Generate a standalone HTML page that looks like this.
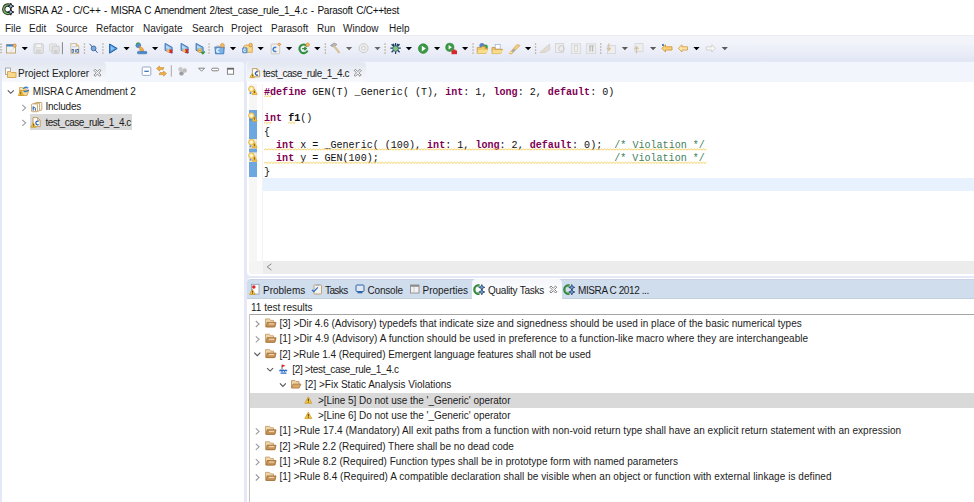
<!DOCTYPE html>
<html><head><meta charset="utf-8"><style>
*{margin:0;padding:0;box-sizing:border-box}
html,body{width:974px;height:502px;overflow:hidden;background:#fff;font-family:"Liberation Sans",sans-serif;font-size:10px;color:#1a1a1a}
.a{position:absolute;white-space:pre}
svg.a{overflow:visible}
.t{font-size:10px;line-height:12px;color:#1b1b1b}
.code{font-family:"Liberation Mono",monospace;font-size:10.07px;line-height:13.33px;color:#101010}
.kw{color:#7f0055;font-weight:bold}
.cm{color:#3f7f5f}
</style></head><body>
<div class="a " style="left:0;top:35px;width:974px;height:27px;background:linear-gradient(#f4f5f9 0%,#f1f3fa 30%,#e9ecf7 70%,#e0e5f4 100%)"></div>
<div class="a " style="left:0;top:34.6px;width:974px;height:1px;background:#ecedf2"></div>
<div class="a " style="left:0;top:61px;width:974px;height:441px;background:#e5e8f6"></div>
<svg class="a" style="left:0px;top:0px" width="16" height="18" viewBox="0 0 16 18">
<path d="M9.47 5.16 A4.3 4.3 0 1 0 9.47 13.24" fill="none" stroke="#2e2e2e" stroke-width="3.3"/>
<path d="M10.02 5.40 A4.3 4.3 0 1 0 10.02 13.00" fill="none" stroke="#74c462" stroke-width="1.3"/>
<path d="M13.90 6.20 L11.68 7.08 L10.80 9.30 L9.92 7.08 L7.70 6.20 L9.92 5.32 L10.80 3.10 L11.68 5.32 Z" fill="#8dbce9" stroke="#1f1f1f" stroke-width="1" stroke-linejoin="round"/>
<path d="M13.90 12.10 L11.68 12.98 L10.80 15.20 L9.92 12.98 L7.70 12.10 L9.92 11.22 L10.80 9.00 L11.68 11.22 Z" fill="#8dbce9" stroke="#1f1f1f" stroke-width="1" stroke-linejoin="round"/>
</svg>
<div class="a t" style="left:18px;top:4.8px;letter-spacing:-0.26px;word-spacing:1.1px;color:#0f0f0f">MISRA A2 - C/C++ - MISRA C Amendment 2/test_case_rule_1_4.c - Parasoft C/C++test</div>
<div class="a t" style="left:5px;top:22.8px">File</div>
<div class="a t" style="left:29px;top:22.8px">Edit</div>
<div class="a t" style="left:56px;top:22.8px">Source</div>
<div class="a t" style="left:96px;top:22.8px">Refactor</div>
<div class="a t" style="left:143px;top:22.8px">Navigate</div>
<div class="a t" style="left:192px;top:22.8px">Search</div>
<div class="a t" style="left:231px;top:22.8px">Project</div>
<div class="a t" style="left:271px;top:22.8px">Parasoft</div>
<div class="a t" style="left:317px;top:22.8px">Run</div>
<div class="a t" style="left:343px;top:22.8px">Window</div>
<div class="a t" style="left:389px;top:22.8px">Help</div>
<svg class="a" style="left:0;top:0" width="974" height="62" viewBox="0 0 974 62"><rect x="0" y="43.5" width="2" height="1.3" fill="#c4b9a5"/><rect x="0" y="46.3" width="2" height="1.3" fill="#c4b9a5"/><rect x="0" y="49.1" width="2" height="1.3" fill="#c4b9a5"/><rect x="0" y="51.9" width="2" height="1.3" fill="#c4b9a5"/><rect x="6.5" y="44.5" width="9" height="8.5" fill="#eaf4fc" stroke="#c9a66b" stroke-width="1"/><rect x="6.5" y="44.5" width="8" height="2" fill="#3d84d2"/><path d="M9.5 52.6 L14.6 47.2" stroke="#f3dcb0" stroke-width="1"/><circle cx="14.6" cy="45.6" r="1.6" fill="#f2c07a" stroke="#c98232" stroke-width="0.8"/><path d="M21.7 47 h6.2 l-3.1 3.3 z" fill="#000"/><rect x="34" y="43.8" width="9.3" height="9.6" rx="1" fill="#e6e6e6" stroke="#cdcdcd" stroke-width="1"/><rect x="36" y="44" width="5.3" height="3.4" fill="#f6f6f6" stroke="#cfcfcf" stroke-width="0.6"/><rect x="36" y="49.5" width="5.3" height="3.8" fill="#d6d6d6"/><rect x="49.5" y="43.8" width="7" height="7.5" rx="1" fill="#e9e9e9" stroke="#d2d2d2" stroke-width="0.8"/><rect x="52" y="46" width="7.3" height="7.6" rx="1" fill="#e2e2e2" stroke="#c9c9c9" stroke-width="0.8"/><rect x="54" y="50" width="3.6" height="3.4" fill="#cfcfcf"/><rect x="61.9" y="42.2" width="1.1" height="12" fill="#8f8f8f"/><path d="M70.8 43.6 h5.6 l2.4 2.4 v7.6 h-8 z" fill="#f1f4f8" stroke="#c7ab80" stroke-width="0.8"/><path d="M76.4 43.6 v2.4 h2.4" fill="#f3cf8f" stroke="#e0a85a" stroke-width="0.8"/><path d="M72 46.8 h4.5" stroke="#a9bfd8" stroke-width="0.8"/><rect x="72" y="49.3" width="1.6" height="3.2" fill="#dfe6ef" stroke="#35598a" stroke-width="0.7"/><rect x="74.9" y="49.3" width="0.8" height="3.2" fill="#35598a"/><rect x="76.8" y="49.3" width="1.6" height="3.2" fill="#dfe6ef" stroke="#35598a" stroke-width="0.7"/><rect x="83.80000000000001" y="43.3" width="1.3" height="1.4" fill="#b3a690"/><rect x="83.80000000000001" y="46.3" width="1.3" height="1.4" fill="#b3a690"/><rect x="83.80000000000001" y="49.3" width="1.3" height="1.4" fill="#b3a690"/><rect x="83.80000000000001" y="52.3" width="1.3" height="1.4" fill="#b3a690"/><path d="M89.6 43.8 L97.6 52.8" stroke="#3a5a9a" stroke-width="1"/><circle cx="93.6" cy="48.4" r="2.4" fill="#7ea8d8" stroke="#3a6aa8" stroke-width="0.9"/><rect x="102.30000000000001" y="43.3" width="1.3" height="1.4" fill="#b3a690"/><rect x="102.30000000000001" y="46.3" width="1.3" height="1.4" fill="#b3a690"/><rect x="102.30000000000001" y="49.3" width="1.3" height="1.4" fill="#b3a690"/><rect x="102.30000000000001" y="52.3" width="1.3" height="1.4" fill="#b3a690"/><path d="M109.6 44 L117.2 48.5 L109.6 53.2 z" fill="#4d9be0" stroke="#1f5ca6" stroke-width="1"/><path d="M110.8 46 L114.6 48.5 L110.8 50.8 z" fill="#8cc4f0"/><path d="M123.5 47 h6.2 l-3.1 3.3 z" fill="#000"/><circle cx="138.3" cy="45.3" r="2.4" fill="#4f8fd0" stroke="#2e6aa8" stroke-width="0.6"/><path d="M136.5 44.3 a2 2 0 0 1 3 -0.8" stroke="#46a046" stroke-width="1.2" fill="none"/><path d="M139.5 46 L143 48.5 L143.5 51 L141.5 52 L140 50.5 z" fill="#f2b04a" stroke="#d08428" stroke-width="0.7"/><rect x="137.5" y="51.4" width="9.3" height="2.4" rx="0.8" fill="#4a8ad0" stroke="#2d6aa8" stroke-width="0.6"/><path d="M152 47 h6.2 l-3.1 3.3 z" fill="#000"/><path d="M165.10000000000002 43.4 L172.10000000000002 47.3 V53.2 L165.10000000000002 50.3 z" fill="#84bdea" stroke="#2f66ad" stroke-width="0.9" stroke-linejoin="round"/><path d="M166.10000000000002 45.4 L169.3 47.2 V49.5 L166.10000000000002 48 z" fill="#b8dcf6"/><circle cx="168.4" cy="50.8" r="1.9" fill="#f2b65e"/><path d="M169.6 49.6 l2.6 3.2 m0 -3.2 l-2.6 3.2" stroke="#d8262a" stroke-width="1.5"/><path d="M181.10000000000002 43.4 L188.10000000000002 47.3 V53.2 L181.10000000000002 50.3 z" fill="#84bdea" stroke="#2f66ad" stroke-width="0.9" stroke-linejoin="round"/><path d="M182.10000000000002 45.4 L185.3 47.2 V49.5 L182.10000000000002 48 z" fill="#b8dcf6"/><circle cx="184.4" cy="50.6" r="1.9" fill="#f2b65e"/><path d="M185.6 49.2 l2.4 3.8 m0 -3.8 l-2.4 3.8" stroke="#cc2a2a" stroke-width="1.5"/><path d="M196.10000000000002 43.4 L203.10000000000002 47.3 V53.2 L196.10000000000002 50.3 z" fill="#84bdea" stroke="#2f66ad" stroke-width="0.9" stroke-linejoin="round"/><path d="M197.10000000000002 45.4 L200.3 47.2 V49.5 L197.10000000000002 48 z" fill="#b8dcf6"/><circle cx="199.8" cy="50.6" r="2" fill="#f5cd6a" stroke="#c8902e" stroke-width="0.6"/><path d="M198.6 50.6 h2.4" stroke="#b07a20" stroke-width="0.6"/><path d="M201.6 52.4 l1.2 1.3 l2 -2.2" stroke="#2a9a2a" stroke-width="1.4" fill="none"/><rect x="208.4" y="43.3" width="1.3" height="1.4" fill="#b3a690"/><rect x="208.4" y="46.3" width="1.3" height="1.4" fill="#b3a690"/><rect x="208.4" y="49.3" width="1.3" height="1.4" fill="#b3a690"/><rect x="208.4" y="52.3" width="1.3" height="1.4" fill="#b3a690"/><path d="M216 46.5 q2 -1.6 4 0" fill="#c9c9c9" stroke="#aaa" stroke-width="0.6"/><path d="M215 47.4 h9.2 l-0.5 6.4 h-8.2 z" fill="#79b3ea" stroke="#3a74b8" stroke-width="0.9"/><path d="M214.2 47.2 h10.6" stroke="#6a8fb8" stroke-width="1"/><path d="M219.3 49 a1.7 1.7 0 1 0 0 3" stroke="#fff" stroke-width="1.2" fill="none"/><circle cx="222.4" cy="45.4" r="1.9" fill="#f1be6a" stroke="#d08a30" stroke-width="0.7"/><path d="M229.9 47 h6.2 l-3.1 3.3 z" fill="#000"/><path d="M243.5 46.5 q2.5 -2.8 5 -1 l1 1 h2.8 v5.8 h-8.8 z" fill="#f7d98a" stroke="#d6a550" stroke-width="0.9"/><rect x="242.6" y="47.8" width="4.4" height="5" rx="0.6" fill="#78b0e6" stroke="#3b77bc" stroke-width="0.7"/><path d="M245.6 49.2 a1.3 1.3 0 1 0 0 2.2" stroke="#fff" stroke-width="0.9" fill="none"/><circle cx="250.6" cy="45" r="1.8" fill="#f1be6a" stroke="#d08a30" stroke-width="0.7"/><path d="M257.6 47 h6.2 l-3.1 3.3 z" fill="#000"/><rect x="271.2" y="44" width="8.5" height="9.8" rx="0.8" fill="#f2f1ee" stroke="#cbc6bc" stroke-width="0.9"/><path d="M276.3 47.6 a2.1 2.1 0 1 0 0 3.6" stroke="#3f7fcd" stroke-width="1.5" fill="none"/><path d="M279.3 42.9 l1.5 1.5 l-1.5 1.5 l-1.5 -1.5 z" fill="#f0c070" stroke="#d08a30" stroke-width="0.9"/><path d="M286 47 h6.2 l-3.1 3.3 z" fill="#000"/><path d="M307.2 46.3 A4.3 4.3 0 1 0 307.6 50.6" stroke="#2f8f3a" stroke-width="2.1" fill="none"/><path d="M302.2 48.6 h3.6 M304.4 47 l1.8 1.6 l-1.8 1.6" stroke="#2f8f3a" stroke-width="1.3" fill="none"/><circle cx="307.6" cy="44.8" r="1.8" fill="#f1be6a" stroke="#d08a30" stroke-width="0.7"/><path d="M314.2 47 h6.2 l-3.1 3.3 z" fill="#000"/><rect x="324.7" y="43.3" width="1.3" height="1.4" fill="#b3a690"/><rect x="324.7" y="46.3" width="1.3" height="1.4" fill="#b3a690"/><rect x="324.7" y="49.3" width="1.3" height="1.4" fill="#b3a690"/><rect x="324.7" y="52.3" width="1.3" height="1.4" fill="#b3a690"/><path d="M330.5 45.5 l3.5 -2.5 l3 1.5 l-1.8 1.2 l-1.7 1.2 z" fill="#b9b9b9" stroke="#8c8c8c" stroke-width="0.7"/><path d="M334 46 L339.5 53" stroke="#d9c39c" stroke-width="2.2"/><path d="M346 47 h6.2 l-3.1 3.3 z" fill="#6a6a6a"/><path d="M361.8 43.8 h3.6 l2.6 2.6 v3.6 l-2.6 2.6 h-3.6 l-2.6 -2.6 v-3.6 z" fill="#ececec" stroke="#c8c8c8" stroke-width="0.9"/><circle cx="363.6" cy="48.2" r="1.8" fill="#f6f6f6" stroke="#c2c2c2" stroke-width="0.8"/><path d="M374.4 47 h6.2 l-3.1 3.3 z" fill="#6a6a6a"/><rect x="384.4" y="43.3" width="1.3" height="1.4" fill="#b3a690"/><rect x="384.4" y="46.3" width="1.3" height="1.4" fill="#b3a690"/><rect x="384.4" y="49.3" width="1.3" height="1.4" fill="#b3a690"/><rect x="384.4" y="52.3" width="1.3" height="1.4" fill="#b3a690"/><path d="M390.4 48.2 h10.4 M395.6 43 v11 M391.6 44.2 l8 8 M399.6 44.2 l-8 8 M393.3 43.8 l1 2 M398 43.8 l-1 2" stroke="#1f3d62" stroke-width="1.25"/><circle cx="395.6" cy="48.6" r="2.8" fill="#86c47a" stroke="#2f5d86" stroke-width="0.8"/><path d="M405.8 47 h6.2 l-3.1 3.3 z" fill="#000"/><circle cx="423.2" cy="48.6" r="4.8" fill="#3a9a44" stroke="#2a7a30" stroke-width="0.6"/><path d="M421.8 45.7 L425.8 48.6 L421.8 51.5 z" fill="#fff"/><path d="M434 47 h6.2 l-3.1 3.3 z" fill="#000"/><circle cx="449.8" cy="47.3" r="4.1" fill="#3a9a44" stroke="#2a7a30" stroke-width="0.6"/><path d="M448.6 45 L451.9 47.3 L448.6 49.6 z" fill="#fff"/><path d="M451.5 50.5 h5.5 v3.7 h-5.5 z" fill="#d9262a"/><rect x="452.6" y="49.6" width="3" height="1.3" fill="#d9262a"/><path d="M462 47 h6.2 l-3.1 3.3 z" fill="#000"/><rect x="472.4" y="43.3" width="1.3" height="1.4" fill="#b3a690"/><rect x="472.4" y="46.3" width="1.3" height="1.4" fill="#b3a690"/><rect x="472.4" y="49.3" width="1.3" height="1.4" fill="#b3a690"/><rect x="472.4" y="52.3" width="1.3" height="1.4" fill="#b3a690"/><circle cx="482" cy="45.5" r="2.6" fill="#5f7fc8"/><circle cx="485.5" cy="47" r="2.4" fill="#3ea04a"/><path d="M477.2 47.5 h4 l1 -1 h3 v2 h2.5 l-1.8 5 h-8.7 z" fill="#f0ca6a" stroke="#c79440" stroke-width="0.8"/><path d="M478.5 50 h9.5 l-1.8 3.5 h-9 z" fill="#f8dd8c"/><rect x="495.2" y="44.5" width="5" height="4.6" fill="#fff" stroke="#9cb2cc" stroke-width="0.7"/><path d="M492 47.5 h3 v1.8 h7.5 l-1.8 4.3 h-8.7 z" fill="#f0ca6a" stroke="#c79440" stroke-width="0.8"/><path d="M493 50.3 h9.6 l-1.6 3.2 h-8.8 z" fill="#f8dd8c"/><path d="M509 53.5 L517 44.5 L520 45.5 L511.5 54 z" fill="#f2cf7e" stroke="#d2a44c" stroke-width="0.7"/><path d="M511.5 51 L514 48.5 L515.5 50 L513 52.5 z" fill="#a9a9a9"/><path d="M509 53.5 L510.8 51.8 L511.8 52.8 z" fill="#fff5d0"/><path d="M525 47 h6.2 l-3.1 3.3 z" fill="#000"/><rect x="534.9" y="43.3" width="1.3" height="1.4" fill="#b3a690"/><rect x="534.9" y="46.3" width="1.3" height="1.4" fill="#b3a690"/><rect x="534.9" y="49.3" width="1.3" height="1.4" fill="#b3a690"/><rect x="534.9" y="52.3" width="1.3" height="1.4" fill="#b3a690"/><path d="M540 52.5 L549.5 44 L550 49.5 L545 52.5 z" fill="#e0ddd6" stroke="#cbc7bf" stroke-width="0.6"/><path d="M541 52 L544.5 49.5 L545.5 51.5 z" fill="#ecd9bb"/><rect x="555.5" y="43.5" width="8" height="9" fill="#ededed" stroke="#d2d2d2" stroke-width="0.8"/><circle cx="561.5" cy="48.5" r="2.8" fill="none" stroke="#cacaca" stroke-width="1"/><rect x="571.3" y="43.8" width="9.4" height="9.8" fill="#ececec" stroke="#d6d6d6" stroke-width="0.8"/><rect x="574.8" y="45.5" width="2.4" height="6" fill="#f6f6f6" stroke="#c4c4c4" stroke-width="0.6"/><rect x="586.3" y="43.8" width="9.4" height="9.8" fill="#ececec" stroke="#d6d6d6" stroke-width="0.8"/><path d="M589 46 h5 M590 46 v5.5 M592.5 46 v5.5" stroke="#b8b8b8" stroke-width="1.2"/><rect x="600.1" y="43.3" width="1.3" height="1.4" fill="#b3a690"/><rect x="600.1" y="46.3" width="1.3" height="1.4" fill="#b3a690"/><rect x="600.1" y="49.3" width="1.3" height="1.4" fill="#b3a690"/><rect x="600.1" y="52.3" width="1.3" height="1.4" fill="#b3a690"/><rect x="607.5" y="45.5" width="8" height="8.2" fill="#eeeeee" stroke="#d0d0d0" stroke-width="0.7"/><path d="M608.8 43.5 v6.5 M607 48 l1.8 2.2 l1.8 -2.2" stroke="#d4c29e" stroke-width="1.2" fill="none"/><path d="M621.8 47 h6.2 l-3.1 3.3 z" fill="#5a5a5a"/><rect x="635" y="43.5" width="8" height="8.2" fill="#eeeeee" stroke="#d0d0d0" stroke-width="0.7"/><path d="M636.5 53.5 v-6 M634.5 49 l2 -2.2 l2 2.2" stroke="#d4c29e" stroke-width="1.2" fill="none"/><path d="M650 47 h6.2 l-3.1 3.3 z" fill="#5a5a5a"/><path d="M661.8 48.3 L665.5 44.8 V46.8 H672 V50 H665.5 V52 z" fill="#f8d27a" stroke="#d59a3a" stroke-width="0.9"/><circle cx="663" cy="45" r="1" fill="#2c5aa0"/><path d="M678.3 48.3 L682 44.8 V46.8 H687.5 V50 H682 V52 z" fill="#fce6b0" stroke="#d8a04a" stroke-width="0.9"/><path d="M693.4 47 h6.2 l-3.1 3.3 z" fill="#000"/><path d="M715.5 48.3 L711.8 44.8 V46.8 H706.3 V50 H711.8 V52 z" fill="#f6f6f6" stroke="#cfcfcf" stroke-width="0.9"/><path d="M721.7 47 h6.2 l-3.1 3.3 z" fill="#5a5a5a"/></svg>
<div class="a " style="left:1.6px;top:62px;width:242.2px;height:440px;background:#fff;border-radius:4px 4px 0 0"></div>
<div class="a " style="left:1.6px;top:62px;width:242.2px;height:20px;background:#f3f5fc;border-radius:4px 4px 0 0"></div>
<div class="a " style="left:1.6px;top:62px;width:104.4px;height:20px;background:linear-gradient(#e2e7f0,#f7f9fc);border-radius:4px 4px 0 0"></div>
<div class="a t" style="left:18px;top:68px">Project Explorer</div>
<div class="a " style="left:246.8px;top:62px;width:728px;height:213.6px;background:#fff;border-radius:4px 0 0 4px"></div>
<div class="a " style="left:246px;top:62px;width:728px;height:20px;background:#f3f5fc;border-radius:4px 0 0 0"></div>
<div class="a " style="left:247px;top:62px;width:119px;height:20px;background:linear-gradient(#e2e7f0,#f7f9fc);border-radius:4px 4px 0 0"></div>
<div class="a t" style="left:263px;top:68px;letter-spacing:-0.45px">test_case_rule_1_4.c</div>
<div class="a " style="left:248.5px;top:84px;width:8.3px;height:176.5px;background:#f6f6f6"></div>
<div class="a " style="left:248.5px;top:260.5px;width:14px;height:13.3px;background:#f4f4f4;border-radius:0 0 0 3px"></div>
<div class="a " style="left:248.7px;top:110px;width:8.2px;height:67.4px;background:#6ea7df"></div>
<div class="a " style="left:262px;top:84px;width:1px;height:176.5px;background:#f3f3f3"></div>
<div class="a " style="left:263px;top:177.5px;width:711px;height:13.3px;background:#e8f2fe"></div>
<div class="a code" style="left:264px;top:85.7px"><span class="kw">#define</span> GEN(T) _Generic( (T), <span class="kw">int</span>: 1, <span class="kw">long</span>: 2, <span class="kw">default</span>: 0)

<span class="kw">int</span> <b>f1</b>()
{
  <span class="kw">int</span> x = _Generic( (100), <span class="kw">int</span>: 1, <span class="kw">long</span>: 2, <span class="kw">default</span>: 0);  <span class="cm">/* Violation */</span>
  <span class="kw">int</span> y = GEN(100);                                       <span class="cm">/* Violation */</span>
}</div>
<div class="a " style="left:262.5px;top:260.5px;width:712px;height:13.3px;background:#ececec"></div>
<svg class="a" style="left:266px;top:263px" width="7" height="8" viewBox="0 0 7 8"><path d="M5.4 0.8 L1.2 3.9 L5.4 7" fill="none" stroke="#858585" stroke-width="1"/></svg>
<div class="a " style="left:247px;top:278px;width:728px;height:224px;background:#fff;border-radius:4px 0 0 0"></div>
<div class="a " style="left:247px;top:278.5px;width:728px;height:20px;background:#cfdded;border-radius:4px 0 0 0;border-top:1px solid #c9d3e3;border-bottom:1px solid #c4cfdc"></div>
<div class="a " style="left:472px;top:279px;width:90px;height:20px;background:linear-gradient(#f4f6fa,#ffffff);border-radius:4px 4px 0 0"></div>
<div class="a t" style="left:263px;top:284.7px;letter-spacing:0px">Problems</div>
<div class="a t" style="left:325px;top:284.7px;letter-spacing:-0.6px">Tasks</div>
<div class="a t" style="left:367.5px;top:284.7px;letter-spacing:-0.2px">Console</div>
<div class="a t" style="left:422.5px;top:284.7px;letter-spacing:0px">Properties</div>
<div class="a t" style="left:488px;top:284.7px;letter-spacing:-0.25px">Quality Tasks</div>
<div class="a t" style="left:578px;top:284.7px;letter-spacing:-0.4px">MISRA C 2012 ...</div>
<div class="a t" style="left:251px;top:302.2px">11 test results</div>
<div class="a " style="left:248.6px;top:313.6px;width:726px;height:1.5px;background:#a5a5a5"></div>
<div class="a " style="left:248.6px;top:314px;width:1.5px;height:188px;background:#c4c4c4"></div>
<div class="a " style="left:250px;top:392.5px;width:724px;height:15.3px;background:#d9d9d9"></div>
<div class="a t" style="left:279.5px;top:317.90px;letter-spacing:0px">[3] >Dir 4.6 (Advisory) typedefs that indicate size and signedness should be used in place of the basic numerical types</div>
<div class="a t" style="left:279.5px;top:333.25px;letter-spacing:0.04px">[1] >Dir 4.9 (Advisory) A function should be used in preference to a function-like macro where they are interchangeable</div>
<div class="a t" style="left:279.5px;top:348.60px;letter-spacing:-0.045px">[2] >Rule 1.4 (Required) Emergent language features shall not be used</div>
<div class="a t" style="left:292.3px;top:363.95px;letter-spacing:-0.34px">[2] >test_case_rule_1_4.c</div>
<div class="a t" style="left:305.1px;top:379.30px;letter-spacing:0px">[2] >Fix Static Analysis Violations</div>
<div class="a t" style="left:317.9px;top:394.65px;letter-spacing:-0.025px">>[Line 5] Do not use the &#39;_Generic&#39; operator</div>
<div class="a t" style="left:317.9px;top:410.00px;letter-spacing:-0.025px">>[Line 6] Do not use the &#39;_Generic&#39; operator</div>
<div class="a t" style="left:279.5px;top:425.35px;letter-spacing:0.043px">[1] >Rule 17.4 (Mandatory) All exit paths from a function with non-void return type shall have an explicit return statement with an expression</div>
<div class="a t" style="left:279.5px;top:440.70px;letter-spacing:-0.04px">[2] >Rule 2.2 (Required) There shall be no dead code</div>
<div class="a t" style="left:279.5px;top:456.05px;letter-spacing:0.015px">[1] >Rule 8.2 (Required) Function types shall be in prototype form with named parameters</div>
<div class="a t" style="left:279.5px;top:471.40px;letter-spacing:0.06px">[1] >Rule 8.4 (Required) A compatible declaration shall be visible when an object or function with external linkage is defined</div>
<div class="a " style="left:30px;top:114px;width:102px;height:16px;background:#d9d9d9"></div>
<div class="a t" style="left:32.7px;top:85.6px;letter-spacing:-0.14px">MISRA C Amendment 2</div>
<div class="a t" style="left:45.4px;top:101.1px;letter-spacing:-0.19px">Includes</div>
<div class="a t" style="left:45.4px;top:116.6px;letter-spacing:-0.48px">test_case_rule_1_4.c</div>
<svg class="a" style="left:0;top:0" width="974" height="502" viewBox="0 0 974 502"><rect x="5.5" y="68" width="5" height="6.5" fill="#fff" stroke="#9a9a9a" stroke-width="0.8"/><path d="M7.5 71.5 h3 l1 1 h4.5 v5 h-8.5 z" fill="#f7d98c" stroke="#d3a24a" stroke-width="0.9"/><path d="M94 70.5 l1.2 -1.2 l2.3 2.3 l2.3 -2.3 l1.2 1.2 l-2.3 2.3 l2.3 2.3 l-1.2 1.2 l-2.3 -2.3 l-2.3 2.3 l-1.2 -1.2 l2.3 -2.3 z" fill="#fff" stroke="#707070" stroke-width="0.85"/><rect x="142.2" y="67" width="8.6" height="8.4" rx="1" fill="#fff" stroke="#93a9c6" stroke-width="1"/><path d="M144.3 71.3 h4.5" stroke="#3d74b8" stroke-width="1.3"/><path d="M156.5 68.5 l3 -2.5 v1.6 h4.5 l-1 2 h-3.5 v1.5 z" fill="#f0b04c" stroke="#c98a2a" stroke-width="0.6"/><path d="M166.5 73.5 l-3 2.7 v-1.6 h-4.5 l1 -2 h3.5 v-1.5 z" fill="#f0b04c" stroke="#c98a2a" stroke-width="0.6"/><rect x="170.8" y="65.2" width="1" height="11.4" fill="#a8a8a8"/><circle cx="180.5" cy="69.3" r="2.2" fill="#c9c9c9"/><circle cx="184.7" cy="70.5" r="2.2" fill="#bdbdbd"/><circle cx="181.5" cy="73.4" r="2.2" fill="#9d9d9d"/><path d="M198.6 68.2 h6 l-3 3 z" fill="#fff" stroke="#777" stroke-width="0.9"/><rect x="211.6" y="68.2" width="7" height="2.6" rx="1.2" fill="#fff" stroke="#777" stroke-width="0.9"/><rect x="227.4" y="68.2" width="6.2" height="6" fill="#fff" stroke="#777" stroke-width="0.9"/><rect x="227.4" y="68" width="6.2" height="1.6" fill="#666"/><path d="M7.8 90.3 l3 3 l3 -3" fill="none" stroke="#555" stroke-width="1.1"/><path d="M19.5 87.5 h3.2 l1 1.2 h2.5 v2 h-6.7 z" fill="#f9e3a6" stroke="#d2a452" stroke-width="0.8"/><path d="M19.5 90.5 h9.5 l-2 5 h-7.5 z" fill="#f6d88e" stroke="#cf9b3c" stroke-width="0.8"/><path d="M23.2 88.8 q2.2 -2.6 5 -0.6 M28.6 89.6 q-1.6 3 -5 1.6" stroke="#3b7fcc" stroke-width="1.4" fill="none"/><path d="M20.825 90.6 L23.45 95.475 H18.2 z" fill="#f6c744" stroke="#c99420" stroke-width="0.7" stroke-linejoin="round"/><rect x="20.487499999999997" y="92.1" width="0.675" height="1.7999999999999998" fill="#3a2a00"/><rect x="20.487499999999997" y="94.35" width="0.675" height="0.6000000000000001" fill="#3a2a00"/><path d="M22.3 104.8 l3.3 3 l-3.3 3" fill="none" stroke="#9c9c9c" stroke-width="1.1"/><rect x="36.0" y="102.5" width="5.8" height="7.8" rx="0.6" fill="#fff" stroke="#bd8f4a" stroke-width="0.8"/><rect x="33.8" y="103.2" width="5.8" height="7.8" rx="0.6" fill="#fff" stroke="#bd8f4a" stroke-width="0.8"/><rect x="31.6" y="103.9" width="5.8" height="7.8" rx="0.6" fill="#fff" stroke="#bd8f4a" stroke-width="0.8"/><path d="M33.2 106.3 v4.4 M33.2 108.6 a1.1 1.1 0 0 1 2.2 0 v2.1" stroke="#2a5ea8" stroke-width="1" fill="none"/><path d="M22.3 119.8 l3.3 3 l-3.3 3" fill="none" stroke="#9c9c9c" stroke-width="1.1"/><path d="M33 117.6 h4.6 l2.6 2.6 v6.4 h-7.2 z" fill="#fdfdfd" stroke="#b78a4a" stroke-width="0.8"/><path d="M37.6 117.6 v2.6 h2.6" fill="none" stroke="#b78a4a" stroke-width="0.7"/><path d="M38.6 121.4 a1.8 1.8 0 1 0 0 3" stroke="#2a5ea8" stroke-width="1.2" fill="none"/><path d="M33.32 122.6 L35.84 127.28 H30.8 z" fill="#f6c744" stroke="#c99420" stroke-width="0.7" stroke-linejoin="round"/><rect x="32.996" y="124.03999999999999" width="0.648" height="1.728" fill="#3a2a00"/><rect x="32.996" y="126.19999999999999" width="0.648" height="0.576" fill="#3a2a00"/><path d="M252.4 68.6 h4.6 l2.6 2.6 v5.6 h-7.2 z" fill="#fdfdfd" stroke="#bf8f4c" stroke-width="0.85"/><path d="M257 68.6 v2.6 h2.6" fill="none" stroke="#bf8f4c" stroke-width="0.7"/><path d="M258 72 a1.7 1.7 0 1 0 0 2.9" stroke="#2c5fa6" stroke-width="1.3" fill="none"/><path d="M252.28 73.2 L254.66 77.62 H249.9 z" fill="#f6c744" stroke="#c99420" stroke-width="0.7" stroke-linejoin="round"/><rect x="251.97400000000002" y="74.56" width="0.6120000000000001" height="1.6320000000000001" fill="#3a2a00"/><rect x="251.97400000000002" y="76.60000000000001" width="0.6120000000000001" height="0.544" fill="#3a2a00"/><path d="M354.2 70.5 l1.2 -1.2 l2.3 2.3 l2.3 -2.3 l1.2 1.2 l-2.3 2.3 l2.3 2.3 l-1.2 1.2 l-2.3 -2.3 l-2.3 2.3 l-1.2 -1.2 l2.3 -2.3 z" fill="#fff" stroke="#707070" stroke-width="0.85"/><rect x="248.7" y="139.0" width="8.2" height="9.6" fill="#f3ead2"/><rect x="248.7" y="152.4" width="8.2" height="9.6" fill="#f3ead2"/><circle cx="251.4" cy="89" r="2.8" fill="#fbe7a0" stroke="#e0b040" stroke-width="0.9"/><circle cx="251.4" cy="89" r="1.1" fill="#fffbe8"/><rect x="249.6" y="92.2" width="1.8" height="1.8" fill="#5a8ac0"/><path d="M254.6 89.2 L257.2 94.6 H252.0 z" fill="#f3c040" stroke="#d09a28" stroke-width="0.6"/><rect x="254.29999999999998" y="91" width="0.7" height="2" fill="#5a3c00"/><circle cx="251.4" cy="115.6" r="2.8" fill="#fbe7a0" stroke="#e0b040" stroke-width="0.9"/><circle cx="251.4" cy="115.6" r="1.1" fill="#fffbe8"/><rect x="249.6" y="118.8" width="1.8" height="1.8" fill="#5a8ac0"/><path d="M254.6 115.8 L257.2 121.19999999999999 H252.0 z" fill="#f3c040" stroke="#d09a28" stroke-width="0.6"/><rect x="254.29999999999998" y="117.6" width="0.7" height="2" fill="#5a3c00"/><circle cx="251.4" cy="142.2" r="2.8" fill="#fbe7a0" stroke="#e0b040" stroke-width="0.9"/><circle cx="251.4" cy="142.2" r="1.1" fill="#fffbe8"/><rect x="249.6" y="145.39999999999998" width="1.8" height="1.8" fill="#5a8ac0"/><path d="M254.6 142.39999999999998 L257.2 147.79999999999998 H252.0 z" fill="#f3c040" stroke="#d09a28" stroke-width="0.6"/><rect x="254.29999999999998" y="144.2" width="0.7" height="2" fill="#5a3c00"/><circle cx="251.4" cy="155.6" r="2.8" fill="#fbe7a0" stroke="#e0b040" stroke-width="0.9"/><circle cx="251.4" cy="155.6" r="1.1" fill="#fffbe8"/><rect x="249.6" y="158.79999999999998" width="1.8" height="1.8" fill="#5a8ac0"/><path d="M254.6 155.79999999999998 L257.2 161.2 H252.0 z" fill="#f3c040" stroke="#d09a28" stroke-width="0.6"/><rect x="254.29999999999998" y="157.6" width="0.7" height="2" fill="#5a3c00"/><path d="M264 96.6 L265.5 95.6 L267.0 96.8 L268.5 95.6 L270.0 96.8 L271.5 95.6" fill="none" stroke="#f2ca52" stroke-width="0.9"/><path d="M264 123.2 L265.5 122.2 L267.0 123.4 L268.5 122.2 L270.0 123.4 L271.5 122.2" fill="none" stroke="#f2ca52" stroke-width="0.9"/><path d="M288 123.2 L289.5 122.2 L291.0 123.4 L292.5 122.2 L294.0 123.4 L295.5 122.2" fill="none" stroke="#f2ca52" stroke-width="0.9"/><path d="M264 149.9 L265.5 148.9 L267.0 150.1 L268.5 148.9 L270.0 150.1 L271.5 148.9 L273.0 150.1 L274.5 148.9 L276.0 150.1 L277.5 148.9 L279.0 150.1 L280.5 148.9 L282.0 150.1 L283.5 148.9 L285.0 150.1 L286.5 148.9 L288.0 150.1 L289.5 148.9 L291.0 150.1 L292.5 148.9 L294.0 150.1 L295.5 148.9 L297.0 150.1 L298.5 148.9 L300.0 150.1 L301.5 148.9 L303.0 150.1 L304.5 148.9 L306.0 150.1 L307.5 148.9 L309.0 150.1 L310.5 148.9 L312.0 150.1 L313.5 148.9 L315.0 150.1 L316.5 148.9 L318.0 150.1 L319.5 148.9 L321.0 150.1 L322.5 148.9 L324.0 150.1 L325.5 148.9 L327.0 150.1 L328.5 148.9 L330.0 150.1 L331.5 148.9 L333.0 150.1 L334.5 148.9 L336.0 150.1 L337.5 148.9 L339.0 150.1 L340.5 148.9 L342.0 150.1 L343.5 148.9 L345.0 150.1 L346.5 148.9 L348.0 150.1 L349.5 148.9 L351.0 150.1 L352.5 148.9 L354.0 150.1 L355.5 148.9 L357.0 150.1 L358.5 148.9 L360.0 150.1 L361.5 148.9 L363.0 150.1 L364.5 148.9 L366.0 150.1 L367.5 148.9 L369.0 150.1 L370.5 148.9 L372.0 150.1 L373.5 148.9 L375.0 150.1 L376.5 148.9 L378.0 150.1 L379.5 148.9 L381.0 150.1 L382.5 148.9 L384.0 150.1 L385.5 148.9 L387.0 150.1 L388.5 148.9 L390.0 150.1 L391.5 148.9 L393.0 150.1 L394.5 148.9 L396.0 150.1 L397.5 148.9 L399.0 150.1 L400.5 148.9 L402.0 150.1 L403.5 148.9 L405.0 150.1 L406.5 148.9 L408.0 150.1 L409.5 148.9 L411.0 150.1 L412.5 148.9 L414.0 150.1 L415.5 148.9 L417.0 150.1 L418.5 148.9 L420.0 150.1 L421.5 148.9 L423.0 150.1 L424.5 148.9 L426.0 150.1 L427.5 148.9 L429.0 150.1 L430.5 148.9 L432.0 150.1 L433.5 148.9 L435.0 150.1 L436.5 148.9 L438.0 150.1 L439.5 148.9 L441.0 150.1 L442.5 148.9 L444.0 150.1 L445.5 148.9 L447.0 150.1 L448.5 148.9 L450.0 150.1 L451.5 148.9 L453.0 150.1 L454.5 148.9 L456.0 150.1 L457.5 148.9 L459.0 150.1 L460.5 148.9 L462.0 150.1 L463.5 148.9 L465.0 150.1 L466.5 148.9 L468.0 150.1 L469.5 148.9 L471.0 150.1 L472.5 148.9 L474.0 150.1 L475.5 148.9 L477.0 150.1 L478.5 148.9 L480.0 150.1 L481.5 148.9 L483.0 150.1 L484.5 148.9 L486.0 150.1 L487.5 148.9 L489.0 150.1 L490.5 148.9 L492.0 150.1 L493.5 148.9 L495.0 150.1 L496.5 148.9 L498.0 150.1 L499.5 148.9 L501.0 150.1 L502.5 148.9 L504.0 150.1 L505.5 148.9 L507.0 150.1 L508.5 148.9 L510.0 150.1 L511.5 148.9 L513.0 150.1 L514.5 148.9 L516.0 150.1 L517.5 148.9 L519.0 150.1 L520.5 148.9 L522.0 150.1 L523.5 148.9 L525.0 150.1 L526.5 148.9 L528.0 150.1 L529.5 148.9 L531.0 150.1 L532.5 148.9 L534.0 150.1 L535.5 148.9 L537.0 150.1 L538.5 148.9 L540.0 150.1 L541.5 148.9 L543.0 150.1 L544.5 148.9 L546.0 150.1 L547.5 148.9 L549.0 150.1 L550.5 148.9 L552.0 150.1 L553.5 148.9 L555.0 150.1 L556.5 148.9 L558.0 150.1 L559.5 148.9 L561.0 150.1 L562.5 148.9 L564.0 150.1 L565.5 148.9 L567.0 150.1 L568.5 148.9 L570.0 150.1 L571.5 148.9 L573.0 150.1 L574.5 148.9 L576.0 150.1 L577.5 148.9 L579.0 150.1 L580.5 148.9 L582.0 150.1 L583.5 148.9 L585.0 150.1 L586.5 148.9 L588.0 150.1 L589.5 148.9 L591.0 150.1 L592.5 148.9 L594.0 150.1 L595.5 148.9 L597.0 150.1 L598.5 148.9 L600.0 150.1 L601.5 148.9 L603.0 150.1 L604.5 148.9 L606.0 150.1 L607.5 148.9 L609.0 150.1 L610.5 148.9 L612.0 150.1 L613.5 148.9 L615.0 150.1 L616.5 148.9 L618.0 150.1 L619.5 148.9 L621.0 150.1 L622.5 148.9 L624.0 150.1 L625.5 148.9 L627.0 150.1 L628.5 148.9 L630.0 150.1 L631.5 148.9 L633.0 150.1 L634.5 148.9 L636.0 150.1 L637.5 148.9 L639.0 150.1 L640.5 148.9 L642.0 150.1 L643.5 148.9 L645.0 150.1 L646.5 148.9 L648.0 150.1 L649.5 148.9 L651.0 150.1 L652.5 148.9 L654.0 150.1 L655.5 148.9 L657.0 150.1 L658.5 148.9 L660.0 150.1 L661.5 148.9 L663.0 150.1 L664.5 148.9 L666.0 150.1 L667.5 148.9 L669.0 150.1 L670.5 148.9 L672.0 150.1 L673.5 148.9 L675.0 150.1 L676.5 148.9 L678.0 150.1 L679.5 148.9 L681.0 150.1 L682.5 148.9 L684.0 150.1 L685.5 148.9 L687.0 150.1 L688.5 148.9 L690.0 150.1 L691.5 148.9 L693.0 150.1 L694.5 148.9 L696.0 150.1 L697.5 148.9 L699.0 150.1 L700.5 148.9 L702.0 150.1 L703.5 148.9 L705.0 150.1 L706.5 148.9" fill="none" stroke="#f2ca52" stroke-width="0.9"/><path d="M264 163.2 L265.5 162.2 L267.0 163.39999999999998 L268.5 162.2 L270.0 163.39999999999998 L271.5 162.2 L273.0 163.39999999999998 L274.5 162.2 L276.0 163.39999999999998 L277.5 162.2 L279.0 163.39999999999998 L280.5 162.2 L282.0 163.39999999999998 L283.5 162.2 L285.0 163.39999999999998 L286.5 162.2 L288.0 163.39999999999998 L289.5 162.2 L291.0 163.39999999999998 L292.5 162.2 L294.0 163.39999999999998 L295.5 162.2 L297.0 163.39999999999998 L298.5 162.2 L300.0 163.39999999999998 L301.5 162.2 L303.0 163.39999999999998 L304.5 162.2 L306.0 163.39999999999998 L307.5 162.2 L309.0 163.39999999999998 L310.5 162.2 L312.0 163.39999999999998 L313.5 162.2 L315.0 163.39999999999998 L316.5 162.2 L318.0 163.39999999999998 L319.5 162.2 L321.0 163.39999999999998 L322.5 162.2 L324.0 163.39999999999998 L325.5 162.2 L327.0 163.39999999999998 L328.5 162.2 L330.0 163.39999999999998 L331.5 162.2 L333.0 163.39999999999998 L334.5 162.2 L336.0 163.39999999999998 L337.5 162.2 L339.0 163.39999999999998 L340.5 162.2 L342.0 163.39999999999998 L343.5 162.2 L345.0 163.39999999999998 L346.5 162.2 L348.0 163.39999999999998 L349.5 162.2 L351.0 163.39999999999998 L352.5 162.2 L354.0 163.39999999999998 L355.5 162.2 L357.0 163.39999999999998 L358.5 162.2 L360.0 163.39999999999998 L361.5 162.2 L363.0 163.39999999999998 L364.5 162.2 L366.0 163.39999999999998 L367.5 162.2 L369.0 163.39999999999998 L370.5 162.2 L372.0 163.39999999999998 L373.5 162.2 L375.0 163.39999999999998 L376.5 162.2 L378.0 163.39999999999998 L379.5 162.2 L381.0 163.39999999999998 L382.5 162.2 L384.0 163.39999999999998 L385.5 162.2 L387.0 163.39999999999998 L388.5 162.2 L390.0 163.39999999999998 L391.5 162.2 L393.0 163.39999999999998 L394.5 162.2 L396.0 163.39999999999998 L397.5 162.2 L399.0 163.39999999999998 L400.5 162.2 L402.0 163.39999999999998 L403.5 162.2 L405.0 163.39999999999998 L406.5 162.2 L408.0 163.39999999999998 L409.5 162.2 L411.0 163.39999999999998 L412.5 162.2 L414.0 163.39999999999998 L415.5 162.2 L417.0 163.39999999999998 L418.5 162.2 L420.0 163.39999999999998 L421.5 162.2 L423.0 163.39999999999998 L424.5 162.2 L426.0 163.39999999999998 L427.5 162.2 L429.0 163.39999999999998 L430.5 162.2 L432.0 163.39999999999998 L433.5 162.2 L435.0 163.39999999999998 L436.5 162.2 L438.0 163.39999999999998 L439.5 162.2 L441.0 163.39999999999998 L442.5 162.2 L444.0 163.39999999999998 L445.5 162.2 L447.0 163.39999999999998 L448.5 162.2 L450.0 163.39999999999998 L451.5 162.2 L453.0 163.39999999999998 L454.5 162.2 L456.0 163.39999999999998 L457.5 162.2 L459.0 163.39999999999998 L460.5 162.2 L462.0 163.39999999999998 L463.5 162.2 L465.0 163.39999999999998 L466.5 162.2 L468.0 163.39999999999998 L469.5 162.2 L471.0 163.39999999999998 L472.5 162.2 L474.0 163.39999999999998 L475.5 162.2 L477.0 163.39999999999998 L478.5 162.2 L480.0 163.39999999999998 L481.5 162.2 L483.0 163.39999999999998 L484.5 162.2 L486.0 163.39999999999998 L487.5 162.2 L489.0 163.39999999999998 L490.5 162.2 L492.0 163.39999999999998 L493.5 162.2 L495.0 163.39999999999998 L496.5 162.2 L498.0 163.39999999999998 L499.5 162.2 L501.0 163.39999999999998 L502.5 162.2 L504.0 163.39999999999998 L505.5 162.2 L507.0 163.39999999999998 L508.5 162.2 L510.0 163.39999999999998 L511.5 162.2 L513.0 163.39999999999998 L514.5 162.2 L516.0 163.39999999999998 L517.5 162.2 L519.0 163.39999999999998 L520.5 162.2 L522.0 163.39999999999998 L523.5 162.2 L525.0 163.39999999999998 L526.5 162.2 L528.0 163.39999999999998 L529.5 162.2 L531.0 163.39999999999998 L532.5 162.2 L534.0 163.39999999999998 L535.5 162.2 L537.0 163.39999999999998 L538.5 162.2 L540.0 163.39999999999998 L541.5 162.2 L543.0 163.39999999999998 L544.5 162.2 L546.0 163.39999999999998 L547.5 162.2 L549.0 163.39999999999998 L550.5 162.2 L552.0 163.39999999999998 L553.5 162.2 L555.0 163.39999999999998 L556.5 162.2 L558.0 163.39999999999998 L559.5 162.2 L561.0 163.39999999999998 L562.5 162.2 L564.0 163.39999999999998 L565.5 162.2 L567.0 163.39999999999998 L568.5 162.2 L570.0 163.39999999999998 L571.5 162.2 L573.0 163.39999999999998 L574.5 162.2 L576.0 163.39999999999998 L577.5 162.2 L579.0 163.39999999999998 L580.5 162.2 L582.0 163.39999999999998 L583.5 162.2 L585.0 163.39999999999998 L586.5 162.2 L588.0 163.39999999999998 L589.5 162.2 L591.0 163.39999999999998 L592.5 162.2 L594.0 163.39999999999998 L595.5 162.2 L597.0 163.39999999999998 L598.5 162.2 L600.0 163.39999999999998 L601.5 162.2 L603.0 163.39999999999998 L604.5 162.2 L606.0 163.39999999999998 L607.5 162.2 L609.0 163.39999999999998 L610.5 162.2 L612.0 163.39999999999998 L613.5 162.2 L615.0 163.39999999999998 L616.5 162.2 L618.0 163.39999999999998 L619.5 162.2 L621.0 163.39999999999998 L622.5 162.2 L624.0 163.39999999999998 L625.5 162.2 L627.0 163.39999999999998 L628.5 162.2 L630.0 163.39999999999998 L631.5 162.2 L633.0 163.39999999999998 L634.5 162.2 L636.0 163.39999999999998 L637.5 162.2 L639.0 163.39999999999998 L640.5 162.2 L642.0 163.39999999999998 L643.5 162.2 L645.0 163.39999999999998 L646.5 162.2 L648.0 163.39999999999998 L649.5 162.2 L651.0 163.39999999999998 L652.5 162.2 L654.0 163.39999999999998 L655.5 162.2 L657.0 163.39999999999998 L658.5 162.2 L660.0 163.39999999999998 L661.5 162.2 L663.0 163.39999999999998 L664.5 162.2 L666.0 163.39999999999998 L667.5 162.2 L669.0 163.39999999999998 L670.5 162.2 L672.0 163.39999999999998 L673.5 162.2 L675.0 163.39999999999998 L676.5 162.2 L678.0 163.39999999999998 L679.5 162.2 L681.0 163.39999999999998 L682.5 162.2 L684.0 163.39999999999998 L685.5 162.2 L687.0 163.39999999999998 L688.5 162.2 L690.0 163.39999999999998 L691.5 162.2 L693.0 163.39999999999998 L694.5 162.2 L696.0 163.39999999999998 L697.5 162.2 L699.0 163.39999999999998 L700.5 162.2 L702.0 163.39999999999998 L703.5 162.2 L705.0 163.39999999999998 L706.5 162.2" fill="none" stroke="#f2ca52" stroke-width="0.9"/><rect x="251.5" y="284.3" width="7.5" height="9.8" fill="#fff" stroke="#8c9bb0" stroke-width="0.8"/><circle cx="253.8" cy="287" r="1.8" fill="#e0262a"/><path d="M252.4 289.2 L255.2 294.4 H249.6 z" fill="#f6c744" stroke="#c99420" stroke-width="0.7" stroke-linejoin="round"/><rect x="252.04" y="290.8" width="0.7200000000000001" height="1.92" fill="#3a2a00"/><rect x="252.04" y="293.2" width="0.7200000000000001" height="0.6400000000000001" fill="#3a2a00"/><rect x="314" y="285" width="7.5" height="9" rx="0.8" fill="#f3f3f3" stroke="#b89058" stroke-width="0.8"/><rect x="316" y="284.2" width="3.5" height="1.6" rx="0.5" fill="#a8b4c4"/><path d="M312 289.8 l1.8 1.8 l4 -4.2" stroke="#2a6ac0" stroke-width="1.2" fill="none"/><rect x="356" y="285" width="8" height="6.5" rx="1" fill="#dfe8f2" stroke="#2f64a8" stroke-width="1"/><rect x="357.5" y="292" width="5" height="1.3" fill="#2f64a8"/><rect x="410.5" y="285" width="8.5" height="8" fill="#f2f2f2" stroke="#8d8d8d" stroke-width="0.9"/><rect x="410.5" y="285" width="8.5" height="1.8" fill="#8d8d8d"/><path d="M414 287 v6" stroke="#c6c6c6" stroke-width="0.8"/><path d="M479.5 285.40000000000003 A4.3 4.3 0 1 0 479.5 293.8" fill="none" stroke="#2e7d3a" stroke-width="2.2"/><path d="M479.5 286.0 A3.7 3.7 0 1 0 479.5 293.20000000000005" fill="none" stroke="#63b957" stroke-width="0.9"/><path d="M481.8 284.6 L482.7 286.6 L484.8 287.40000000000003 L482.7 288.20000000000005 L481.8 290.20000000000005 L480.9 288.20000000000005 L478.8 287.40000000000003 L480.9 286.6 z" fill="#6f9fd4" stroke="#1f3f66" stroke-width="0.8"/><path d="M481.8 289.20000000000005 L482.7 291.20000000000005 L484.8 292.0 L482.7 292.8 L481.8 294.8 L480.9 292.8 L478.8 292.0 L480.9 291.20000000000005 z" fill="#6f9fd4" stroke="#1f3f66" stroke-width="0.8"/><path d="M549.8 287.2 l1.2 -1.2 l2.3 2.3 l2.3 -2.3 l1.2 1.2 l-2.3 2.3 l2.3 2.3 l-1.2 1.2 l-2.3 -2.3 l-2.3 2.3 l-1.2 -1.2 l2.3 -2.3 z" fill="#fff" stroke="#707070" stroke-width="0.85"/><path d="M569.5 285.40000000000003 A4.3 4.3 0 1 0 569.5 293.8" fill="none" stroke="#2e7d3a" stroke-width="2.2"/><path d="M569.5 286.0 A3.7 3.7 0 1 0 569.5 293.20000000000005" fill="none" stroke="#63b957" stroke-width="0.9"/><path d="M571.8 284.6 L572.7 286.6 L574.8 287.40000000000003 L572.7 288.20000000000005 L571.8 290.20000000000005 L570.9 288.20000000000005 L568.8 287.40000000000003 L570.9 286.6 z" fill="#6f9fd4" stroke="#1f3f66" stroke-width="0.8"/><path d="M571.8 289.20000000000005 L572.7 291.20000000000005 L574.8 292.0 L572.7 292.8 L571.8 294.8 L570.9 292.8 L568.8 292.0 L570.9 291.20000000000005 z" fill="#6f9fd4" stroke="#1f3f66" stroke-width="0.8"/><path d="M255.8 321.0 l3.3 3 l-3.3 3" fill="none" stroke="#9a9a9a" stroke-width="1.1"/><path d="M265.5 318.9 h4 l1 1.5 h3 v6.5 h-8 z" fill="#f0d5a8" stroke="#c29a62" stroke-width="0.8"/><path d="M267 322.4 h9 l-1 4.5 h-8.5 z" fill="#c9955a" stroke="#9c6b36" stroke-width="0.8"/><path d="M269 323.9 h5" stroke="#f3dfbf" stroke-width="1"/><path d="M255.8 336.35 l3.3 3 l-3.3 3" fill="none" stroke="#9a9a9a" stroke-width="1.1"/><path d="M265.5 334.25 h4 l1 1.5 h3 v6.5 h-8 z" fill="#f0d5a8" stroke="#c29a62" stroke-width="0.8"/><path d="M267 337.75 h9 l-1 4.5 h-8.5 z" fill="#c9955a" stroke="#9c6b36" stroke-width="0.8"/><path d="M269 339.25 h5" stroke="#f3dfbf" stroke-width="1"/><path d="M254.3 352.7 l3 3 l3 -3" fill="none" stroke="#555" stroke-width="1.1"/><path d="M265.5 349.59999999999997 h4 l1 1.5 h3 v6.5 h-8 z" fill="#f0d5a8" stroke="#c29a62" stroke-width="0.8"/><path d="M267 353.09999999999997 h9 l-1 4.5 h-8.5 z" fill="#c9955a" stroke="#9c6b36" stroke-width="0.8"/><path d="M269 354.59999999999997 h5" stroke="#f3dfbf" stroke-width="1"/><path d="M267.1 368.05 l3 3 l3 -3" fill="none" stroke="#555" stroke-width="1.1"/><path d="M282 364.75 v5" stroke="#444" stroke-width="0.8"/><path d="M282 364.45 l3.5 1.2 l-3.5 1.5 z" fill="#e02020"/><path d="M279.5 371.25 q1.2 -2 2.5 0 q1.2 -2 2.5 0 q1.2 -2 2.5 0 M280.5 373.05 h6" stroke="#2a6ac8" stroke-width="1.3" fill="none"/><path d="M279.90000000000003 383.4 l3 3 l3 -3" fill="none" stroke="#555" stroke-width="1.1"/><path d="M291.5 380.59999999999997 h3.5 l1 1 h3 v5.8 h-7.5 z" fill="#f0d6a8" stroke="#b8894e" stroke-width="0.8"/><path d="M293 384.09999999999997 h8 l-2 4 h-7.5 z" fill="#d9a868" stroke="#a8783e" stroke-width="0.8"/><path d="M308.3 396.75 L311.8 403.25 H304.8 z" fill="#f6c744" stroke="#c99420" stroke-width="0.7" stroke-linejoin="round"/><rect x="307.85" y="398.75" width="0.9" height="2.4" fill="#3a2a00"/><rect x="307.85" y="401.75" width="0.9" height="0.8" fill="#3a2a00"/><path d="M308.3 412.09999999999997 L311.8 418.59999999999997 H304.8 z" fill="#f6c744" stroke="#c99420" stroke-width="0.7" stroke-linejoin="round"/><rect x="307.85" y="414.09999999999997" width="0.9" height="2.4" fill="#3a2a00"/><rect x="307.85" y="417.09999999999997" width="0.9" height="0.8" fill="#3a2a00"/><path d="M255.8 428.45 l3.3 3 l-3.3 3" fill="none" stroke="#9a9a9a" stroke-width="1.1"/><path d="M265.5 426.34999999999997 h4 l1 1.5 h3 v6.5 h-8 z" fill="#f0d5a8" stroke="#c29a62" stroke-width="0.8"/><path d="M267 429.84999999999997 h9 l-1 4.5 h-8.5 z" fill="#c9955a" stroke="#9c6b36" stroke-width="0.8"/><path d="M269 431.34999999999997 h5" stroke="#f3dfbf" stroke-width="1"/><path d="M255.8 443.8 l3.3 3 l-3.3 3" fill="none" stroke="#9a9a9a" stroke-width="1.1"/><path d="M265.5 441.7 h4 l1 1.5 h3 v6.5 h-8 z" fill="#f0d5a8" stroke="#c29a62" stroke-width="0.8"/><path d="M267 445.2 h9 l-1 4.5 h-8.5 z" fill="#c9955a" stroke="#9c6b36" stroke-width="0.8"/><path d="M269 446.7 h5" stroke="#f3dfbf" stroke-width="1"/><path d="M255.8 459.15000000000003 l3.3 3 l-3.3 3" fill="none" stroke="#9a9a9a" stroke-width="1.1"/><path d="M265.5 457.05 h4 l1 1.5 h3 v6.5 h-8 z" fill="#f0d5a8" stroke="#c29a62" stroke-width="0.8"/><path d="M267 460.55 h9 l-1 4.5 h-8.5 z" fill="#c9955a" stroke="#9c6b36" stroke-width="0.8"/><path d="M269 462.05 h5" stroke="#f3dfbf" stroke-width="1"/><path d="M255.8 474.5 l3.3 3 l-3.3 3" fill="none" stroke="#9a9a9a" stroke-width="1.1"/><path d="M265.5 472.4 h4 l1 1.5 h3 v6.5 h-8 z" fill="#f0d5a8" stroke="#c29a62" stroke-width="0.8"/><path d="M267 475.9 h9 l-1 4.5 h-8.5 z" fill="#c9955a" stroke="#9c6b36" stroke-width="0.8"/><path d="M269 477.4 h5" stroke="#f3dfbf" stroke-width="1"/></svg>
</body></html>
